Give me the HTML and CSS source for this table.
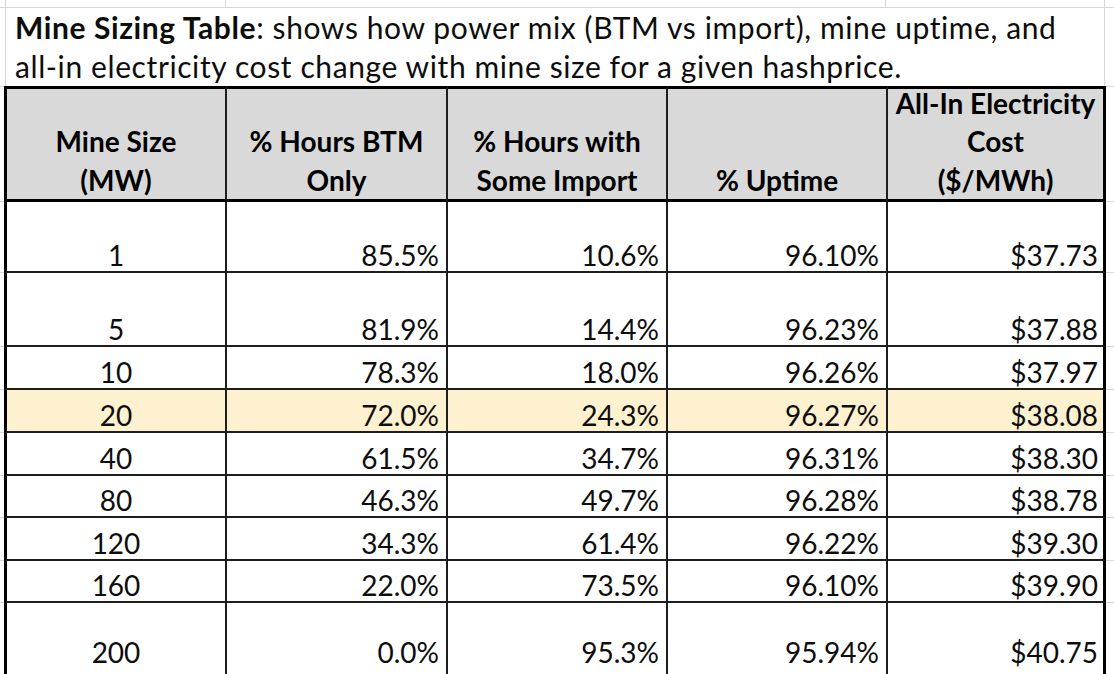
FILE: index.html
```html
<!DOCTYPE html>
<html>
<head>
<meta charset="utf-8">
<link rel="stylesheet" href="styles.css">
</head>
<body>
<div class="sheet">
  <div class="topstrip">
    <div class="tcell"></div><div class="tcell"></div><div class="tcell"></div><div class="tcell"></div><div class="tcell last"></div>
  </div>
  <div class="title">
    <div class="tline"><b>Mine Sizing Table</b>: shows how power mix (BTM vs import), mine uptime, and</div>
    <div class="tline">all-in electricity cost change with mine size for a given hashprice.</div>
  </div>
  <div class="grid">
    <div class="g gl hdr-g"></div>
    <div class="c h first">Mine Size<br>(MW)</div>
    <div class="c h">% Hours BTM<br>Only</div>
    <div class="c h">% Hours with<br>Some Import</div>
    <div class="c h">% Uptime</div>
    <div class="c h lastc">All-In Electricity<br>Cost<br>($/MWh)</div>
    <div class="g gr hdr-g"></div>

    <div class="g gl"></div><div class="c first ctr">1</div><div class="c">85.5%</div><div class="c">10.6%</div><div class="c">96.10%</div><div class="c lastc">$37.73</div><div class="g gr"></div>
    <div class="g gl"></div><div class="c first ctr">5</div><div class="c">81.9%</div><div class="c">14.4%</div><div class="c">96.23%</div><div class="c lastc">$37.88</div><div class="g gr"></div>
    <div class="g gl"></div><div class="c first ctr">10</div><div class="c">78.3%</div><div class="c">18.0%</div><div class="c">96.26%</div><div class="c lastc">$37.97</div><div class="g gr"></div>
    <div class="g gl"></div><div class="c first ctr hl">20</div><div class="c hl">72.0%</div><div class="c hl">24.3%</div><div class="c hl">96.27%</div><div class="c lastc hl">$38.08</div><div class="g gr"></div>
    <div class="g gl"></div><div class="c first ctr">40</div><div class="c">61.5%</div><div class="c">34.7%</div><div class="c">96.31%</div><div class="c lastc">$38.30</div><div class="g gr"></div>
    <div class="g gl"></div><div class="c first ctr">80</div><div class="c">46.3%</div><div class="c">49.7%</div><div class="c">96.28%</div><div class="c lastc">$38.78</div><div class="g gr"></div>
    <div class="g gl"></div><div class="c first ctr">120</div><div class="c">34.3%</div><div class="c">61.4%</div><div class="c">96.22%</div><div class="c lastc">$39.30</div><div class="g gr"></div>
    <div class="g gl"></div><div class="c first ctr">160</div><div class="c">22.0%</div><div class="c">73.5%</div><div class="c">96.10%</div><div class="c lastc">$39.90</div><div class="g gr"></div>
    <div class="g gl"></div><div class="c first ctr tall">200</div><div class="c tall">0.0%</div><div class="c tall">95.3%</div><div class="c tall">95.94%</div><div class="c lastc tall">$40.75</div><div class="g gr"></div>
  </div>
</div>
</body>
</html>
```
FILE: styles.css
```css
html, body {
  margin: 0;
  padding: 0;
  background: #ffffff;
}
.sheet {
  width: 1114px;
  height: 674px;
  overflow: hidden;
  font-family: "Lato", "Open Sans", sans-serif;
  color: #0d0d0d;
}
.topstrip {
  display: grid;
  grid-template-columns: 6px 220px 660px 219px 1fr;
  height: 7px;
  border-bottom: 1px solid #d6d6d6;
}
.tcell {
  border-right: 1px solid #d6d6d6;
}
.tcell.last {
  border-right: none;
}
.title {
  margin-left: 5px;
  width: 1100px;
  height: 78px;
  border-left: 1px solid #d6d6d6;
  border-right: 1px solid #d6d6d6;
  padding-left: 9px;
  box-sizing: border-box;
  font-size: 30px;
  line-height: 39px;
  letter-spacing: 0.6px;
}
.tline {
  white-space: nowrap;
}
.title b {
  font-weight: 700;
}
.grid {
  display: grid;
  grid-template-columns: 4px 223px 221px 220px 220px 218px 8px;
  grid-template-rows: 116px 71px 74px 43px 43px 43px 42px 43px 42px 80px;
}
.g {
  border-bottom: 1px solid #d6d6d6;
  box-sizing: border-box;
}
.hdr-g {
  border-top: 1px solid #d6d6d6;
}
.c {
  box-sizing: border-box;
  border-right: 2px solid #1e1e1e;
  border-bottom: 2px solid #1e1e1e;
  display: flex;
  align-items: flex-end;
  justify-content: flex-end;
  padding-right: 7px;
  font-size: 28px;
  line-height: 32px;
  white-space: nowrap;
}
.c.first {
  border-left: 3px solid #000;
}
.c.lastc {
  border-right: 3px solid #000;
  padding-right: 5px;
}
.c.ctr {
  justify-content: center;
  padding-right: 0;
}
.c.h {
  background: #d9d9d9;
  border-top: 3px solid #000;
  border-bottom: 3px solid #000;
  justify-content: center;
  text-align: center;
  padding-right: 0;
  font-weight: 700;
  line-height: 38.5px;
  color: #000;
}
.c.hl {
  background: #fdf1d0;
}
.c.tall {
  border-bottom: none;
  padding-bottom: 15px;
}
```
